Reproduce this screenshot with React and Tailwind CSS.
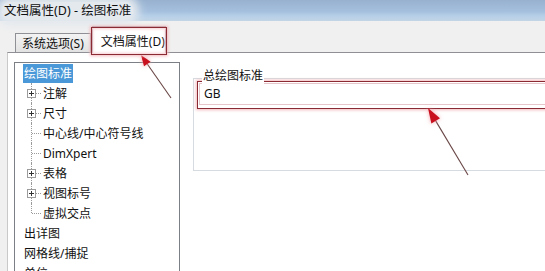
import React from 'react';

// tree rows: level 0 = top item, level 1 = child under 绘图标准
const TREE = [
  { label: '绘图标准', level: 0, selected: true },
  { label: '注解', level: 1, plus: true },
  { label: '尺寸', level: 1, plus: true },
  { label: '中心线/中心符号线', level: 1 },
  { label: 'DimXpert', level: 1 },
  { label: '表格', level: 1, plus: true },
  { label: '视图标号', level: 1, plus: true },
  { label: '虚拟交点', level: 1, last: true },
  { label: '出详图', level: 0 },
  { label: '网格线/捕捉', level: 0 },
  { label: '单位', level: 0 },
];

function Arrow({ tip, tail, len, half }) {
  const dx = tail[0] - tip[0];
  const dy = tail[1] - tip[1];
  const d = Math.hypot(dx, dy);
  const ux = dx / d;
  const uy = dy / d;
  const bx = tip[0] + ux * len;
  const by = tip[1] + uy * len;
  const pts = `${tip[0]},${tip[1]} ${bx - uy * half},${by + ux * half} ${bx + uy * half},${by - ux * half}`;
  return (
    <g>
      <line x1={tail[0]} y1={tail[1]} x2={bx} y2={by} stroke="#6a4646" strokeWidth="1.1" />
      <polygon points={pts} fill="#f4a0a8" filter="url(#glow)" />
      <polygon points={pts} fill="#c8101e" />
    </g>
  );
}

function TreeRow({ item }) {
  if (item.level === 0) {
    return (
      <div className="flex h-[20px] items-center pl-[8px]">
        <span
          className={`leading-[19px] h-[19px] px-[1px] ${
            item.selected ? 'bg-[#4a98d8] text-white' : 'text-[#111]'
          }`}
        >
          {item.label}
        </span>
      </div>
    );
  }
  return (
    <div className="flex h-[20px] items-center">
      <div className="relative h-full w-[28px] shrink-0">
        <div
          className={`absolute left-[16px] top-0 border-l border-dotted border-[#9a9a9a] ${
            item.last ? 'h-[10px]' : 'h-[20px]'
          }`}
        />
        <div className="absolute left-[17px] top-[10px] w-[9px] border-t border-dotted border-[#9a9a9a]" />
        {item.plus && (
          <div className="absolute left-[12px] top-[6px] flex h-[9px] w-[9px] items-center justify-center border border-[#9c9c9c] bg-white">
            <div className="relative h-[5px] w-[5px]">
              <div className="absolute left-0 top-[2px] h-px w-[5px] bg-[#333]" />
              <div className="absolute left-[2px] top-0 h-[5px] w-px bg-[#333]" />
            </div>
          </div>
        )}
      </div>
      <span className="leading-[19px] text-[#111]">{item.label}</span>
    </div>
  );
}

export default function App() {
  return (
    <div className="relative flex h-[271px] w-[545px] flex-col overflow-hidden bg-[#f0f0f0] font-['Noto_Sans','Noto_Sans_CJK_SC',sans-serif] text-[12px]">
      {/* Title bar */}
      <div className="flex h-[21px] shrink-0 items-center bg-[linear-gradient(to_bottom,#97b1cf,#a5c0de_55%,#b6cfe8_75%,#c2d5e6)]">
        <span className="ml-[2px] rounded-[8px] bg-[#e4e9ee] px-[2px] text-[12.5px] leading-[18px] text-[#111] shadow-[0_0_8px_6px_#e4e9ee]">
          文档属性(D) - 绘图标准
        </span>
      </div>

      {/* Tabs */}
      <div className="flex h-[31px] shrink-0 items-end pl-[15px]">
        <div className="flex h-[19px] items-center border border-b-0 border-[#8e9096] bg-[linear-gradient(to_bottom,#f3f3f3,#e2e2e2)] px-[6px] pt-[2px] leading-[16px] text-[#111]">
          系统选项(S)
        </div>
        <div className="relative z-10 -mb-px ml-[1px] flex h-[27px] w-[74px] items-center border border-b-0 border-[#8e9096] bg-white pl-[8px] pt-[4px] leading-[16px] text-[#111]">
          文档属性(D)
          <div className="pointer-events-none absolute -left-[2px] top-0 h-[28px] w-[76px] border-[1.5px] border-[#8c2a34] shadow-[0_0_3px_1px_#f2b8be,inset_0_0_3px_1px_#f6cdd2]" />
        </div>
      </div>

      {/* Tab panel */}
      <div className="ml-[7px] flex flex-1 border-l border-t border-l-[#c9c9c9] border-t-[#8e9096] bg-white">
        <div className="ml-[6px] mt-[9px] w-[166px] shrink-0 self-start border border-[#7c7f86] pb-[20px]">
          {TREE.map((item) => (
            <TreeRow key={item.label} item={item} />
          ))}
        </div>

        <div className="relative ml-[13px] mt-[25px] h-[93px] w-[400px] shrink-0 border border-[#d5dbe0]">
          <span className="absolute left-[8px] top-[-11px] bg-white px-[1px] leading-[16px] text-[#111]">
            总绘图标准
          </span>
          <div className="ml-[3px] mt-[2px] h-[28px] w-[390px] border-[1.5px] border-[#8c2a34] p-[1px] shadow-[0_0_3px_1px_#f2b8be]">
            <div className="flex h-[22px] items-center border border-[#e6c6ca] bg-white pl-[4px] leading-[16px] text-[#111]">
              GB
            </div>
          </div>
        </div>
      </div>

      {/* annotation arrows */}
      <svg className="pointer-events-none absolute left-0 top-0" width="545" height="271">
        <defs>
          <filter id="glow" x="-50%" y="-50%" width="200%" height="200%">
            <feGaussianBlur stdDeviation="2" />
          </filter>
        </defs>
        <Arrow tip={[141, 55]} tail={[171, 98]} len={11} half={4} />
        <Arrow tip={[428, 108]} tail={[468, 175]} len={15} half={5} />
      </svg>
    </div>
  );
}
